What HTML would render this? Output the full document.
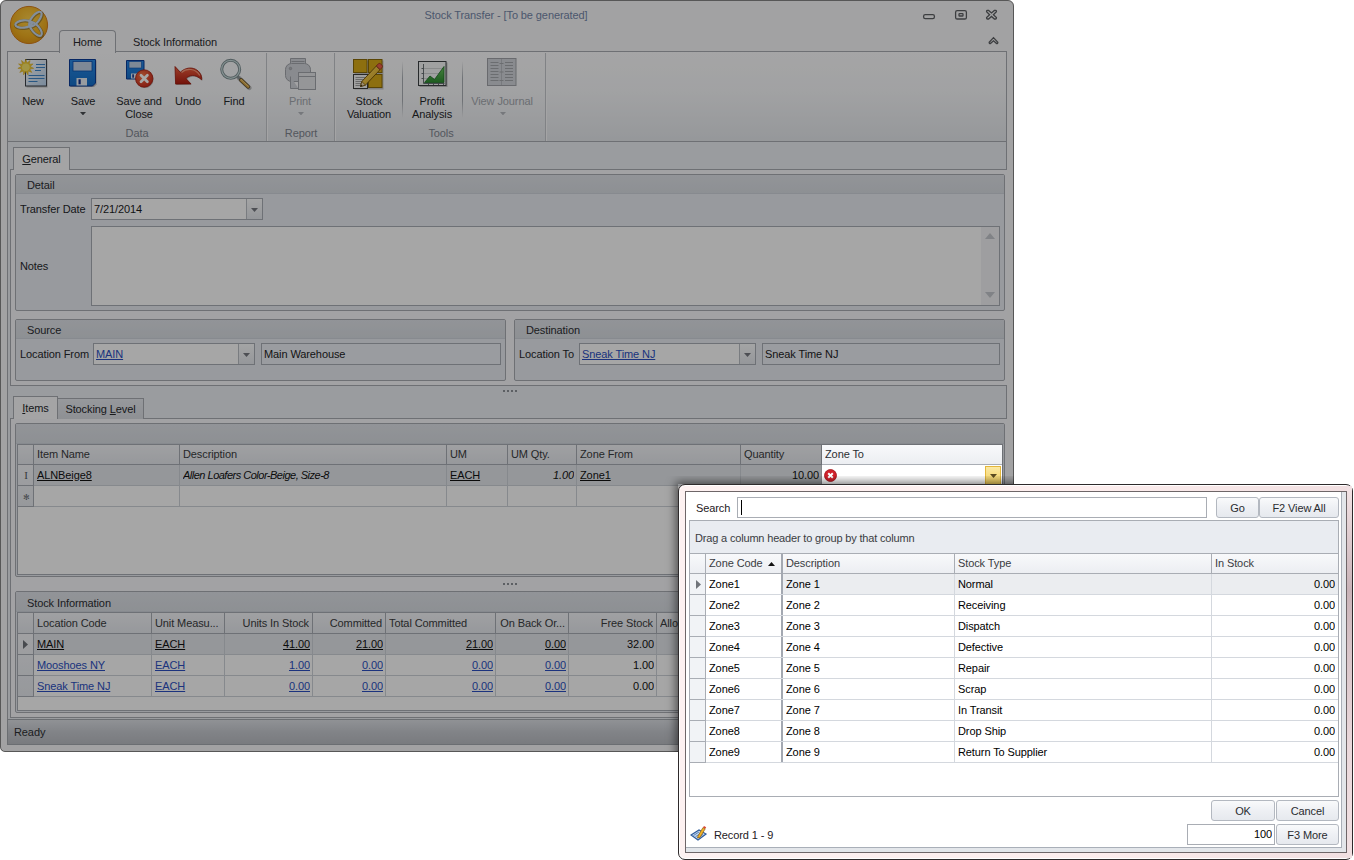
<!DOCTYPE html>
<html><head><meta charset="utf-8"><title>Stock Transfer</title><style>
html,body{margin:0;padding:0}
body{width:1354px;height:860px;background:#fff;position:relative;overflow:hidden;font-family:"Liberation Sans",sans-serif;font-size:11px;letter-spacing:-0.1px}
div,svg.a{position:absolute;box-sizing:border-box}
.t{white-space:nowrap;overflow:hidden}
#main{left:0;top:0;width:1014px;height:752px;box-sizing:border-box;border:1px solid #858585;border-radius:6px 6px 5px 5px;background:#f8f8f9;overflow:hidden}
#main>div,#main>svg{margin:-1px 0 0 -1px}
#dim{left:0;top:0;width:1014px;height:752px;border-radius:6px 6px 5px 5px;background:rgba(0,0,0,0.345)}
#pop{left:678px;top:484px;width:675px;height:376px;box-sizing:border-box;border:1px solid #2e2a2b;border-radius:7px;background:linear-gradient(90deg,#fdf1f1,#fdeeee 60%,#f1dfe1);box-shadow:inset 0 0 0 1px #fff}
</style></head><body>
<div id="main">
<div class="t" style="left:380px;top:6px;width:252px;height:18px;line-height:18px;text-align:center;color:#7486a8">Stock Transfer - [To be generated]</div>
<svg class="a" style="left:918px;top:4px" width="90" height="46" viewBox="0 0 90 46" fill="none" stroke="#5e6064" stroke-width="1.3">
<rect x="5.6" y="10.6" width="10.8" height="4" rx="1.6"/>
<rect x="37.6" y="6.6" width="10.8" height="8.4" rx="1.6"/><rect x="41" y="9.6" width="4" height="2.4" rx=".6"/>
<path d="M68.6 7.2 q0-.8 .8-.8 h1.2 l2.9 2.6 l2.9-2.6 h1.2 q.8 0 .8 .8 v.6 l-3 2.9 l3 2.9 v.6 q0 .8-.8 .8 h-1.2 l-2.9-2.6 l-2.9 2.6 h-1.2 q-.8 0-.8-.8 v-.6 l3-2.9 l-3-2.9z"/>
<path d="M71.2 38.2 l4.3-4.6 l4.3 4.6 q.2 1.4-1.2 1.4 l-3.1-2.8 l-3.1 2.8 q-1.4 0-1.2-1.4z"/>
</svg>
<svg class="a" style="left:8px;top:4px" width="42" height="42" viewBox="0 0 42 42">
<defs><radialGradient id="ab" cx="50%" cy="35%" r="65%"><stop offset="0" stop-color="#ffd048"/><stop offset=".7" stop-color="#f2b020"/><stop offset="1" stop-color="#e49a18"/></radialGradient></defs>
<circle cx="21" cy="21" r="18.6" fill="url(#ab)" stroke="#d8801c" stroke-width="1"/>
<g fill="none" stroke="#6a5a30" stroke-width="3.4" opacity=".55" transform="translate(.4 .6)"><ellipse cx="15.7" cy="20" rx="8.4" ry="3.7" transform="rotate(-5 15.7 20)"/><ellipse cx="27.4" cy="15" rx="8.8" ry="3.7" transform="rotate(-51 27.4 15)"/><ellipse cx="27.7" cy="25" rx="8.5" ry="3.7" transform="rotate(50 27.7 25)"/></g>
<g fill="none" stroke="#cadbee" stroke-width="2.2"><ellipse cx="15.7" cy="20" rx="8.4" ry="3.7" transform="rotate(-5 15.7 20)"/><ellipse cx="27.4" cy="15" rx="8.8" ry="3.7" transform="rotate(-51 27.4 15)"/><ellipse cx="27.7" cy="25" rx="8.5" ry="3.7" transform="rotate(50 27.7 25)"/></g>
</svg>
<div style="left:7px;top:51px;width:1000px;height:91px;border:1px solid #a9acb2;background:linear-gradient(#fcfcfd,#f6f7f9 45%,#e5e8ec)"></div>
<div style="left:59px;top:30px;width:57px;height:23px;border:1px solid #a9acb2;border-bottom:none;border-radius:4px 4px 0 0;background:#fcfcfd"></div>
<div class="t" style="left:59px;top:33px;width:57px;height:18px;line-height:18px;text-align:center;color:#2a2c30">Home</div>
<div class="t" style="left:126px;top:33px;width:98px;height:18px;line-height:18px;text-align:center;color:#2a2c30">Stock Information</div>
<div style="left:266px;top:53px;width:1px;height:88px;background:#c4c7cc"></div>
<div style="left:267px;top:53px;width:1px;height:88px;background:#fbfbfc"></div>
<div style="left:334px;top:53px;width:1px;height:88px;background:#c4c7cc"></div>
<div style="left:335px;top:53px;width:1px;height:88px;background:#fbfbfc"></div>
<div style="left:545px;top:53px;width:1px;height:88px;background:#c4c7cc"></div>
<div style="left:546px;top:53px;width:1px;height:88px;background:#fbfbfc"></div>
<div style="left:402px;top:61px;width:1px;height:57px;background:linear-gradient(rgba(170,174,180,0),#aaaeb4 30%,#aaaeb4 70%,rgba(170,174,180,0))"></div>
<div style="left:462px;top:61px;width:1px;height:57px;background:linear-gradient(rgba(170,174,180,0),#aaaeb4 30%,#aaaeb4 70%,rgba(170,174,180,0))"></div>
<div class="t" style="left:107px;top:124px;width:60px;height:18px;line-height:18px;color:#7f858f;text-align:center">Data</div>
<div class="t" style="left:271px;top:124px;width:60px;height:18px;line-height:18px;color:#7f858f;text-align:center">Report</div>
<div class="t" style="left:411px;top:124px;width:60px;height:18px;line-height:18px;color:#7f858f;text-align:center">Tools</div>
<div class="t" style="left:8px;top:92px;width:50px;height:18px;line-height:18px;text-align:center;color:#26282c">New</div>
<div class="t" style="left:58px;top:92px;width:50px;height:18px;line-height:18px;text-align:center;color:#26282c">Save</div>
<div class="t" style="left:104px;top:92px;width:70px;height:18px;line-height:18px;text-align:center;color:#26282c">Save and</div>
<div class="t" style="left:104px;top:105px;width:70px;height:18px;line-height:18px;text-align:center;color:#26282c">Close</div>
<div class="t" style="left:163px;top:92px;width:50px;height:18px;line-height:18px;text-align:center;color:#26282c">Undo</div>
<div class="t" style="left:209px;top:92px;width:50px;height:18px;line-height:18px;text-align:center;color:#26282c">Find</div>
<div class="t" style="left:275px;top:92px;width:50px;height:18px;line-height:18px;text-align:center;color:#a4a8ae">Print</div>
<div class="t" style="left:334px;top:92px;width:70px;height:18px;line-height:18px;text-align:center;color:#26282c">Stock</div>
<div class="t" style="left:334px;top:105px;width:70px;height:18px;line-height:18px;text-align:center;color:#26282c">Valuation</div>
<div class="t" style="left:397px;top:92px;width:70px;height:18px;line-height:18px;text-align:center;color:#26282c">Profit</div>
<div class="t" style="left:397px;top:105px;width:70px;height:18px;line-height:18px;text-align:center;color:#26282c">Analysis</div>
<div class="t" style="left:462px;top:92px;width:80px;height:18px;line-height:18px;text-align:center;color:#a4a8ae">View Journal</div>
<svg class="a" style="left:80.0px;top:112px" width="6" height="3.4" viewBox="0 0 6 3.4"><path d="M0 0h6L3.0 3.4z" fill="#4a4d52"/></svg>
<svg class="a" style="left:297.5px;top:112px" width="6" height="3.4" viewBox="0 0 6 3.4"><path d="M0 0h6L3.0 3.4z" fill="#b4b8be"/></svg>
<svg class="a" style="left:499.5px;top:112px" width="6" height="3.4" viewBox="0 0 6 3.4"><path d="M0 0h6L3.0 3.4z" fill="#b4b8be"/></svg>
<svg class="a" style="left:0px;top:52px" width="560" height="42" viewBox="0 52 560 42">
<defs>
<linearGradient id="pg" x1="0" y1="0" x2="1" y2="1"><stop offset="0" stop-color="#ffffff"/><stop offset="1" stop-color="#b9d3ee"/></linearGradient>
<linearGradient id="fl" x1="0" y1="0" x2="0" y2="1"><stop offset="0" stop-color="#2a8ae6"/><stop offset="1" stop-color="#146ec8"/></linearGradient>
<radialGradient id="rd" cx="40%" cy="35%" r="70%"><stop offset="0" stop-color="#f87848"/><stop offset="1" stop-color="#c8281c"/></radialGradient>
<linearGradient id="un" x1="0" y1="0" x2="0" y2="1"><stop offset="0" stop-color="#f06040"/><stop offset="1" stop-color="#b01c10"/></linearGradient>
<linearGradient id="gr" x1="0" y1="0" x2="0" y2="1"><stop offset="0" stop-color="#6cc860"/><stop offset="1" stop-color="#2c8c30"/></linearGradient>
<linearGradient id="pn" x1="0" y1="0" x2="1" y2="1"><stop offset="0" stop-color="#ffe070"/><stop offset="1" stop-color="#d8a010"/></linearGradient>
</defs>
<!-- New -->
<rect x="26.5" y="60.5" width="21" height="27" fill="#8a8a8a" opacity=".5"/>
<rect x="25.5" y="59.5" width="21" height="26.500" fill="url(#pg)" stroke="#3c4048"/>
<path d="M36 64.500h9M36 67.500h9M35 70.500h6M28.500 75.500h16M28.500 78.500h16M28.500 81.500h9" stroke="#3d86c8" stroke-width="1.100"/>
<path d="M25.80 59.20L27.04 62.98L30.13 60.47L29.13 64.32L33.08 63.88L30.16 66.57L33.72 68.34L29.80 69.03L31.85 72.44L28.18 70.90L28.05 74.88L25.80 71.60L23.55 74.88L23.42 70.90L19.75 72.44L21.80 69.03L17.88 68.34L21.44 66.57L18.52 63.88L22.47 64.32L21.47 60.47L24.56 62.98z" fill="#f2cc30" stroke="#d8a818" stroke-width=".5"/>
<circle cx="25.8" cy="67.2" r="3.8" fill="#f8e468"/>
<!-- Save -->
<path d="M70.500 60.500h26v24l-2.500 2.500h-23.500z" fill="#7a7a7a" opacity=".5"/>
<path d="M69.500 59.500h26v23.500l-3 3h-23z" fill="url(#fl)" stroke="#0c3c98"/>
<rect x="73" y="61.500" width="19" height="9.500" fill="#c0d2e6" stroke="#0c50b0" stroke-width=".8"/>
<rect x="76.500" y="78" width="10.500" height="7.500" fill="#e8eef4"/>
<rect x="78.500" y="79.300" width="2.200" height="5" fill="#10308c"/>
<!-- Save and close -->
<path d="M126.500 60.500h17.500v18.500h-17.500z" fill="url(#fl)" stroke="#0c3c98"/>
<rect x="129" y="61.500" width="12.500" height="6.500" fill="#c0d2e6" stroke="#0c50b0" stroke-width=".6"/>
<rect x="131" y="73.500" width="6.500" height="5" fill="#e8eef4"/><rect x="132.300" y="74.300" width="1.600" height="3.400" fill="#10308c"/>
<circle cx="144.800" cy="79.300" r="8.800" fill="#707070" opacity=".45"/>
<circle cx="144.200" cy="78.500" r="8.700" fill="url(#rd)" stroke="#a82010" stroke-width=".8"/>
<path d="M141 75.300l6.400 6.400M147.400 75.300l-6.400 6.400" stroke="#ffffff" stroke-width="2.700" stroke-linecap="round"/>
<!-- Undo -->
<path d="M175 66.500l.6 17.600 15.400-.2-5-5.300c2.800-3.300 9-5.200 15.600 1.200 1.300-8.800-10.800-17-21.300-7.600z" fill="#6a6a6a" opacity=".4" transform="translate(.8 .9)"/>
<path d="M175 66.500l.6 17.600 15.400-.2-5-5.300c2.800-3.300 9-5.200 15.600 1.200 1.300-8.800-10.800-17-21.300-7.600z" fill="url(#un)" stroke="#981408" stroke-width=".8" stroke-linejoin="round"/>
<path d="M181.500 72.500c5-4.500 14-4.500 18.300 3" fill="none" stroke="#ffb090" stroke-width="1.200" opacity=".8"/>
<!-- Find -->
<path d="M238 77l10.500 10" stroke="#606060" stroke-width="4.400" stroke-linecap="round" opacity=".4" transform="translate(.8 .9)"/>
<path d="M237.500 76.500l4 4" stroke="#8c9498" stroke-width="2.600"/>
<path d="M241 80l7.300 6.800" stroke="#5c4c2c" stroke-width="3.800" stroke-linecap="round"/><path d="M241 80l7.300 6.800" stroke="#d4a444" stroke-width="2.400" stroke-linecap="round"/>
<path d="M241.300 79.700l7 6.500" stroke="#f0d088" stroke-width=".9" stroke-linecap="round"/>
<circle cx="230.700" cy="69.300" r="9" fill="#f4f8fa" fill-opacity=".55" stroke="#7c8c90" stroke-width="3"/>
<circle cx="230.700" cy="69.300" r="9" fill="none" stroke="#c8dcdc" stroke-width="1.200"/>
<!-- Print (disabled) -->
<g stroke="#a2a5ab" fill="#d2d5da" stroke-width="1">
<path d="M290.500 63.500v-5h15v5"/>
<rect x="285.500" y="63.500" width="25" height="18" rx="6"/>
<path d="M291.500 61.500h13M290.500 76.500v12h8"/>
<rect x="298.500" y="72.500" width="17" height="17" fill="#e4e6e9"/>
<path d="M298.500 76.500h17" />
<circle cx="290.500" cy="68.500" r="1.200" fill="#b4b7bc"/>
</g>
<!-- Stock Valuation -->
<rect x="354.500" y="60.500" width="29" height="29" fill="#6a6a6a" opacity=".35"/>
<rect x="353.500" y="59.500" width="13.500" height="13" fill="#d8aa18" stroke="#8a6a08"/>
<rect x="368.500" y="59.500" width="13.500" height="13" fill="#d8aa18" stroke="#8a6a08"/>
<rect x="368.500" y="74.500" width="13.500" height="13" fill="#d8aa18" stroke="#8a6a08"/>
<rect x="353.500" y="74.500" width="14" height="14" fill="#f4f4f4" stroke="#3c3c3c"/>
<path d="M355.500 77.500h10M355.500 79.500h10M355.500 81.500h10M355.500 83.500h10M355.500 85.500h6" stroke="#8c8c8c" stroke-width=".8"/>
<path d="M360.500 86.500l1.300-5 14.500-15.500 3.800 3.600-14.600 15.500z" fill="url(#pn)" stroke="#705008" stroke-width=".9" stroke-linejoin="round"/>
<path d="M376.300 66l2.300-2.400c1.200-1.100 4.900 2.300 3.700 3.600l-2.200 2.400z" fill="#e86048" stroke="#903020" stroke-width=".8"/>
<path d="M360.500 86.500l1.300-5 3.700 3.600z" fill="#f0d8b0" stroke="#705008" stroke-width=".7"/>
<path d="M360.500 86.500l.5-1.900 1.400 1.400z" fill="#302010"/>
<!-- Profit Analysis -->
<rect x="419.500" y="62.500" width="28" height="24.500" fill="#6a6a6a" opacity=".4"/>
<rect x="418.500" y="61.500" width="27.500" height="24" fill="#f4f6f6" stroke="#3c4044"/>
<path d="M423.500 64v19.500h21" fill="none" stroke="#5c6468" stroke-width=".9"/>
<path d="M424 68.500h20M424 73.500h20M424 78.500h20" stroke="#c8cccc" stroke-width=".8"/>
<path d="M424.500 82.500l5.500-6.500 4.500 3.500 9.500-13v16z" fill="url(#gr)" stroke="#1c6c24" stroke-width=".8"/>
<path d="M421.500 68.500h2M421.500 73.500h2M421.500 78.500h2M428.500 83.500v1.500M433.500 83.500v1.500M438.500 83.500v1.500M443.500 83.500v1.500" stroke="#5c6468" stroke-width=".9"/>
<!-- View Journal (disabled) -->
<g stroke="#a0a3a9" stroke-width="1">
<rect x="487.500" y="58.500" width="28.500" height="27" fill="#d2d5da"/>
<path d="M501.500 59v26" stroke="#b8bbc0"/>
<path d="M490.500 62.500h8M490.500 65.500h8M490.500 68.500h8M490.500 71.500h8M490.500 74.500h8M490.500 77.500h8M490.500 80.500h8M505 62.500h8M505 65.500h8M505 68.500h8M505 71.500h8M505 74.500h8M505 77.500h8M505 80.500h8" stroke="#a4a7ac" stroke-width="1"/>
<path d="M499.500 63.500h4M499.500 72h4M499.500 80.500h4" stroke="#a4a7ac"/>
</g>
</svg>

<div style="left:7px;top:142px;width:1000px;height:578px;border-left:1px solid #a9acb2;border-right:1px solid #a9acb2;background:#ebeef3;box-sizing:border-box"></div>
<div style="left:10px;top:169px;width:997px;height:217px;border:1px solid #a9acb2;border-right:none;background:#f7f8fa;box-sizing:border-box"></div>
<div style="left:13px;top:147px;width:57px;height:23px;border:1px solid #a9acb2;border-bottom:none;background:#fafbfc;box-sizing:border-box"></div>
<div class="t" style="left:13px;top:150px;width:57px;height:18px;line-height:18px;text-align:center;color:#26282c"><u>G</u>eneral</div>
<div style="left:15px;top:174px;width:990px;height:137px;border:1px solid #a9acb2;border-radius:2px;background:#e8ebf1;box-sizing:border-box"></div>
<div style="left:16px;top:175px;width:988px;height:19px;background:linear-gradient(#dfe2e8,#d8dce2);border-bottom:1px solid #cfd3da;box-sizing:border-box"></div>
<div class="t" style="left:27px;top:176px;width:200px;height:19px;line-height:19px;color:#2c2e32">Detail</div>
<div class="t" style="left:20px;top:200px;width:70px;height:18px;line-height:18px;color:#26282c">Transfer Date</div>
<div style="left:91px;top:198px;width:172px;height:22px;border:1px solid #a9adb4;background:#fefefe;box-sizing:border-box"></div>
<div style="left:246px;top:199px;width:1px;height:20px;background:#b9bdc4"></div>
<div style="left:247px;top:199px;width:15px;height:20px;background:linear-gradient(#fafbfc,#e4e7ec)"></div>
<svg class="a" style="left:251.0px;top:207.5px" width="7" height="4" viewBox="0 0 7 4"><path d="M0 0h7L3.5 4z" fill="#767980"/></svg>
<div class="t" style="left:94px;top:199px;width:150px;height:20px;line-height:20px;color:#1c1c1e">7/21/2014</div>
<div class="t" style="left:20px;top:257px;width:70px;height:18px;line-height:18px;color:#26282c">Notes</div>
<div style="left:91px;top:226px;width:909px;height:80px;border:1px solid #a9adb4;background:#fefefe;box-sizing:border-box"></div>
<div style="left:981px;top:227px;width:18px;height:78px;background:#f1f2f4"></div>
<svg class="a" style="left:985px;top:233px" width="10" height="6"><path d="M0 6L5 0L10 6z" fill="#c4c7cd"/></svg>
<svg class="a" style="left:985px;top:292px" width="10" height="6"><path d="M0 0L5 6L10 0z" fill="#c4c7cd"/></svg>
<div style="left:15px;top:319px;width:491px;height:62px;border:1px solid #a9acb2;border-radius:2px;background:#e8ebf1;box-sizing:border-box"></div>
<div style="left:16px;top:320px;width:489px;height:19px;background:linear-gradient(#dfe2e8,#d8dce2);border-bottom:1px solid #cfd3da;box-sizing:border-box"></div>
<div class="t" style="left:27px;top:321px;width:200px;height:19px;line-height:19px;color:#2c2e32">Source</div>
<div style="left:514px;top:319px;width:491px;height:62px;border:1px solid #a9acb2;border-radius:2px;background:#e8ebf1;box-sizing:border-box"></div>
<div style="left:515px;top:320px;width:489px;height:19px;background:linear-gradient(#dfe2e8,#d8dce2);border-bottom:1px solid #cfd3da;box-sizing:border-box"></div>
<div class="t" style="left:526px;top:321px;width:200px;height:19px;line-height:19px;color:#2c2e32">Destination</div>
<div class="t" style="left:20px;top:345px;width:72px;height:18px;line-height:18px;color:#26282c">Location From</div>
<div style="left:93px;top:343px;width:162px;height:22px;border:1px solid #a9adb4;background:#fefefe;box-sizing:border-box"></div>
<div style="left:238px;top:344px;width:1px;height:20px;background:#b9bdc4"></div>
<div style="left:239px;top:344px;width:15px;height:20px;background:linear-gradient(#fafbfc,#e4e7ec)"></div>
<svg class="a" style="left:243.0px;top:352.5px" width="7" height="4" viewBox="0 0 7 4"><path d="M0 0h7L3.5 4z" fill="#767980"/></svg>
<div class="t" style="left:96px;top:344px;width:140px;height:20px;line-height:20px;color:#2b4fc0"><u>MAIN</u></div>
<div style="left:261px;top:343px;width:240px;height:22px;border:1px solid #a9adb4;background:#eceff4;box-sizing:border-box"></div>
<div class="t" style="left:264px;top:344px;width:200px;height:20px;line-height:20px;color:#1c1c1e">Main Warehouse</div>
<div class="t" style="left:519px;top:345px;width:60px;height:18px;line-height:18px;color:#26282c">Location To</div>
<div style="left:579px;top:343px;width:177px;height:22px;border:1px solid #a9adb4;background:#fefefe;box-sizing:border-box"></div>
<div style="left:739px;top:344px;width:1px;height:20px;background:#b9bdc4"></div>
<div style="left:740px;top:344px;width:15px;height:20px;background:linear-gradient(#fafbfc,#e4e7ec)"></div>
<svg class="a" style="left:744.0px;top:352.5px" width="7" height="4" viewBox="0 0 7 4"><path d="M0 0h7L3.5 4z" fill="#767980"/></svg>
<div class="t" style="left:582px;top:344px;width:155px;height:20px;line-height:20px;color:#2b4fc0"><u>Sneak Time NJ</u></div>
<div style="left:762px;top:343px;width:238px;height:22px;border:1px solid #a9adb4;background:#eceff4;box-sizing:border-box"></div>
<div class="t" style="left:765px;top:344px;width:200px;height:20px;line-height:20px;color:#1c1c1e">Sneak Time NJ</div>
<div style="left:503px;top:390px;width:2px;height:2px;background:#8d9198"></div>
<div style="left:507px;top:390px;width:2px;height:2px;background:#8d9198"></div>
<div style="left:511px;top:390px;width:2px;height:2px;background:#8d9198"></div>
<div style="left:515px;top:390px;width:2px;height:2px;background:#8d9198"></div>
<div style="left:10px;top:418px;width:997px;height:300px;border:1px solid #a9acb2;border-right:none;background:#f7f8fa;box-sizing:border-box"></div>
<div style="left:57px;top:398px;width:87px;height:21px;border:1px solid #a9acb2;border-bottom:none;background:linear-gradient(#e6e9ee,#d9dce2);box-sizing:border-box"></div>
<div class="t" style="left:57px;top:400px;width:87px;height:18px;line-height:18px;text-align:center;color:#26282c">Stocking <u>L</u>evel</div>
<div style="left:13px;top:396px;width:45px;height:23px;border:1px solid #a9acb2;border-bottom:none;background:#fafbfc;box-sizing:border-box"></div>
<div class="t" style="left:13px;top:399px;width:45px;height:18px;line-height:18px;text-align:center;color:#26282c"><u>I</u>tems</div>
<div style="left:15px;top:423px;width:990px;height:154px;border:1px solid #a9acb2;border-radius:2px;background:#e8ebf1;box-sizing:border-box"></div>
<div style="left:16px;top:424px;width:988px;height:20px;background:linear-gradient(#dfe2e8,#d8dce2);border-bottom:1px solid #cfd3da;box-sizing:border-box"></div>
<div style="left:17px;top:444px;width:986px;height:131px;border:1px solid #a9adb4;background:#fdfdfe;box-sizing:border-box"></div>
<div style="left:18px;top:445px;width:984px;height:19px;background:linear-gradient(#f4f5f8,#e6e9ee)"></div>
<div style="left:18px;top:464px;width:984px;height:1px;background:#a9adb4"></div>
<div style="left:33px;top:445px;width:1px;height:19px;background:#a9adb4"></div>
<div style="left:179px;top:445px;width:1px;height:19px;background:#a9adb4"></div>
<div class="t" style="left:37px;top:445px;width:141px;height:18px;line-height:18px;color:#3a3c40">Item Name</div>
<div style="left:446px;top:445px;width:1px;height:19px;background:#a9adb4"></div>
<div class="t" style="left:183px;top:445px;width:262px;height:18px;line-height:18px;color:#3a3c40">Description</div>
<div style="left:507px;top:445px;width:1px;height:19px;background:#a9adb4"></div>
<div class="t" style="left:450px;top:445px;width:56px;height:18px;line-height:18px;color:#3a3c40">UM</div>
<div style="left:576px;top:445px;width:1px;height:19px;background:#a9adb4"></div>
<div class="t" style="left:511px;top:445px;width:64px;height:18px;line-height:18px;color:#3a3c40">UM Qty.</div>
<div style="left:740px;top:445px;width:1px;height:19px;background:#a9adb4"></div>
<div class="t" style="left:580px;top:445px;width:159px;height:18px;line-height:18px;color:#3a3c40">Zone From</div>
<div style="left:821px;top:445px;width:1px;height:19px;background:#a9adb4"></div>
<div class="t" style="left:744px;top:445px;width:76px;height:18px;line-height:18px;color:#3a3c40">Quantity</div>
<div style="left:1001px;top:445px;width:1px;height:19px;background:#a9adb4"></div>
<div class="t" style="left:825px;top:445px;width:175px;height:18px;line-height:18px;color:#3a3c40">Zone To</div>
<div style="left:34px;top:465px;width:968px;height:21px;background:#e4e7ec"></div>
<div style="left:18px;top:485px;width:984px;height:1px;background:#cdd1d7"></div>
<div style="left:18px;top:506px;width:984px;height:1px;background:#cdd1d7"></div>
<div style="left:179px;top:465px;width:1px;height:42px;background:#cdd1d7"></div>
<div style="left:446px;top:465px;width:1px;height:42px;background:#cdd1d7"></div>
<div style="left:507px;top:465px;width:1px;height:42px;background:#cdd1d7"></div>
<div style="left:576px;top:465px;width:1px;height:42px;background:#cdd1d7"></div>
<div style="left:740px;top:465px;width:1px;height:42px;background:#cdd1d7"></div>
<div style="left:821px;top:465px;width:1px;height:42px;background:#cdd1d7"></div>
<div style="left:1001px;top:465px;width:1px;height:42px;background:#cdd1d7"></div>
<div style="left:18px;top:465px;width:15px;height:42px;background:linear-gradient(#f4f5f8,#e6e9ee)"></div>
<div style="left:33px;top:465px;width:1px;height:42px;background:#a9adb4"></div>
<div style="left:18px;top:485px;width:16px;height:1px;background:#a9adb4"></div>
<div style="left:18px;top:506px;width:16px;height:1px;background:#a9adb4"></div>
<div class="t" style="left:21px;top:466px;width:12px;height:19px;line-height:19px;color:#55585e;font-family:'Liberation Serif',serif;font-size:11px;text-align:center;width:10px">I</div>
<div class="t" style="left:20px;top:488px;width:12px;height:19px;line-height:19px;color:#6a6d73;font-size:8px;text-align:center">✻</div>
<div class="t" style="left:37px;top:466px;width:140px;height:19px;line-height:19px;color:#111"><u>ALNBeige8</u></div>
<div class="t" style="left:183px;top:466px;width:260px;height:19px;line-height:19px;color:#111;letter-spacing:-0.5px"><i>Allen Loafers Color-Beige, Size-8</i></div>
<div class="t" style="left:450px;top:466px;width:55px;height:19px;line-height:19px;color:#111"><u>EACH</u></div>
<div class="t" style="left:508px;top:466px;width:66px;height:19px;line-height:19px;color:#111;text-align:right"><i>1.00</i></div>
<div class="t" style="left:580px;top:466px;width:100px;height:19px;line-height:19px;color:#111"><u>Zone1</u></div>
<div class="t" style="left:741px;top:466px;width:78px;height:19px;line-height:19px;color:#111;text-align:right">10.00</div>
<div style="left:503px;top:583px;width:2px;height:2px;background:#8d9198"></div>
<div style="left:507px;top:583px;width:2px;height:2px;background:#8d9198"></div>
<div style="left:511px;top:583px;width:2px;height:2px;background:#8d9198"></div>
<div style="left:515px;top:583px;width:2px;height:2px;background:#8d9198"></div>
<div style="left:15px;top:591px;width:990px;height:122px;border:1px solid #a9acb2;border-radius:2px;background:#e8ebf1;box-sizing:border-box"></div>
<div style="left:16px;top:592px;width:988px;height:20px;background:linear-gradient(#dfe2e8,#d8dce2);border-bottom:1px solid #cfd3da;box-sizing:border-box"></div>
<div class="t" style="left:27px;top:593px;width:200px;height:20px;line-height:20px;color:#2c2e32">Stock Information</div>
<div style="left:17px;top:612px;width:986px;height:99px;border:1px solid #a9adb4;background:#fdfdfe;box-sizing:border-box"></div>
<div style="left:18px;top:613px;width:984px;height:20px;background:linear-gradient(#f4f5f8,#e6e9ee)"></div>
<div style="left:18px;top:633px;width:984px;height:1px;background:#a9adb4"></div>
<div style="left:33px;top:613px;width:1px;height:20px;background:#a9adb4"></div>
<div style="left:151px;top:613px;width:1px;height:20px;background:#a9adb4"></div>
<div class="t" style="left:37px;top:614px;width:111px;height:19px;line-height:19px;color:#3a3c40">Location Code</div>
<div style="left:224px;top:613px;width:1px;height:20px;background:#a9adb4"></div>
<div class="t" style="left:155px;top:614px;width:66px;height:19px;line-height:19px;color:#3a3c40">Unit Measu...</div>
<div style="left:312px;top:613px;width:1px;height:20px;background:#a9adb4"></div>
<div class="t" style="left:228px;top:614px;width:81px;height:19px;line-height:19px;color:#3a3c40;text-align:right">Units In Stock</div>
<div style="left:385px;top:613px;width:1px;height:20px;background:#a9adb4"></div>
<div class="t" style="left:316px;top:614px;width:66px;height:19px;line-height:19px;color:#3a3c40;text-align:right">Committed</div>
<div style="left:495px;top:613px;width:1px;height:20px;background:#a9adb4"></div>
<div class="t" style="left:389px;top:614px;width:103px;height:19px;line-height:19px;color:#3a3c40">Total Committed</div>
<div style="left:568px;top:613px;width:1px;height:20px;background:#a9adb4"></div>
<div class="t" style="left:499px;top:614px;width:66px;height:19px;line-height:19px;color:#3a3c40;text-align:right">On Back Or...</div>
<div style="left:656px;top:613px;width:1px;height:20px;background:#a9adb4"></div>
<div class="t" style="left:572px;top:614px;width:81px;height:19px;line-height:19px;color:#3a3c40;text-align:right">Free Stock</div>
<div style="left:760px;top:613px;width:1px;height:20px;background:#a9adb4"></div>
<div class="t" style="left:660px;top:614px;width:97px;height:19px;line-height:19px;color:#3a3c40">Allo</div>
<div style="left:34px;top:634px;width:968px;height:20px;background:#e4e7ec"></div>
<div style="left:18px;top:654px;width:984px;height:1px;background:#cdd1d7"></div>
<div style="left:18px;top:675px;width:984px;height:1px;background:#cdd1d7"></div>
<div style="left:18px;top:696px;width:984px;height:1px;background:#cdd1d7"></div>
<div style="left:151px;top:634px;width:1px;height:63px;background:#cdd1d7"></div>
<div style="left:224px;top:634px;width:1px;height:63px;background:#cdd1d7"></div>
<div style="left:312px;top:634px;width:1px;height:63px;background:#cdd1d7"></div>
<div style="left:385px;top:634px;width:1px;height:63px;background:#cdd1d7"></div>
<div style="left:495px;top:634px;width:1px;height:63px;background:#cdd1d7"></div>
<div style="left:568px;top:634px;width:1px;height:63px;background:#cdd1d7"></div>
<div style="left:656px;top:634px;width:1px;height:63px;background:#cdd1d7"></div>
<div style="left:760px;top:634px;width:1px;height:63px;background:#cdd1d7"></div>
<div style="left:18px;top:634px;width:15px;height:63px;background:linear-gradient(#f4f5f8,#e6e9ee)"></div>
<div style="left:33px;top:634px;width:1px;height:63px;background:#a9adb4"></div>
<div style="left:18px;top:654px;width:16px;height:1px;background:#a9adb4"></div>
<div style="left:18px;top:675px;width:16px;height:1px;background:#a9adb4"></div>
<div style="left:18px;top:696px;width:16px;height:1px;background:#a9adb4"></div>
<svg class="a" style="left:23px;top:640px" width="5" height="9"><path d="M0 0L5 4.5L0 9z" fill="#6f7379"/></svg>
<div class="t" style="left:37px;top:635px;width:112px;height:19px;line-height:19px;color:#111"><u>MAIN</u></div>
<div class="t" style="left:155px;top:635px;width:66px;height:19px;line-height:19px;color:#111"><u>EACH</u></div>
<div class="t" style="left:225px;top:635px;width:85px;height:19px;line-height:19px;color:#111;text-align:right"><u>41.00</u></div>
<div class="t" style="left:313px;top:635px;width:70px;height:19px;line-height:19px;color:#111;text-align:right"><u>21.00</u></div>
<div class="t" style="left:386px;top:635px;width:107px;height:19px;line-height:19px;color:#111;text-align:right"><u>21.00</u></div>
<div class="t" style="left:496px;top:635px;width:70px;height:19px;line-height:19px;color:#111;text-align:right"><u>0.00</u></div>
<div class="t" style="left:569px;top:635px;width:85px;height:19px;line-height:19px;color:#111;text-align:right">32.00</div>
<div class="t" style="left:37px;top:656px;width:112px;height:19px;line-height:19px;color:#2b4fc0"><u>Mooshoes NY</u></div>
<div class="t" style="left:155px;top:656px;width:66px;height:19px;line-height:19px;color:#2b4fc0"><u>EACH</u></div>
<div class="t" style="left:225px;top:656px;width:85px;height:19px;line-height:19px;color:#2b4fc0;text-align:right"><u>1.00</u></div>
<div class="t" style="left:313px;top:656px;width:70px;height:19px;line-height:19px;color:#2b4fc0;text-align:right"><u>0.00</u></div>
<div class="t" style="left:386px;top:656px;width:107px;height:19px;line-height:19px;color:#2b4fc0;text-align:right"><u>0.00</u></div>
<div class="t" style="left:496px;top:656px;width:70px;height:19px;line-height:19px;color:#2b4fc0;text-align:right"><u>0.00</u></div>
<div class="t" style="left:569px;top:656px;width:85px;height:19px;line-height:19px;color:#111;text-align:right">1.00</div>
<div class="t" style="left:37px;top:677px;width:112px;height:19px;line-height:19px;color:#2b4fc0"><u>Sneak Time NJ</u></div>
<div class="t" style="left:155px;top:677px;width:66px;height:19px;line-height:19px;color:#2b4fc0"><u>EACH</u></div>
<div class="t" style="left:225px;top:677px;width:85px;height:19px;line-height:19px;color:#2b4fc0;text-align:right"><u>0.00</u></div>
<div class="t" style="left:313px;top:677px;width:70px;height:19px;line-height:19px;color:#2b4fc0;text-align:right"><u>0.00</u></div>
<div class="t" style="left:386px;top:677px;width:107px;height:19px;line-height:19px;color:#2b4fc0;text-align:right"><u>0.00</u></div>
<div class="t" style="left:496px;top:677px;width:70px;height:19px;line-height:19px;color:#2b4fc0;text-align:right"><u>0.00</u></div>
<div class="t" style="left:569px;top:677px;width:85px;height:19px;line-height:19px;color:#111;text-align:right">0.00</div>
<div style="left:7px;top:719px;width:1000px;height:26px;border:1px solid #a4a8ae;background:linear-gradient(#dcdfe4,#c6c9cf 50%,#b9bcc2);box-sizing:border-box"></div>
<div class="t" style="left:14px;top:723px;width:100px;height:18px;line-height:18px;color:#2c2e32">Ready</div>
</div>
<div id="dim"></div>
<div style="left:822px;top:445px;width:180px;height:19px;background:linear-gradient(#f8f9fb,#eceef2)"></div>
<div style="left:822px;top:464px;width:180px;height:1px;background:#a9adb4"></div>
<div class="t" style="left:825px;top:445px;width:100px;height:18px;line-height:18px;color:#2c2e32">Zone To</div>
<div style="left:822px;top:465px;width:180px;height:20px;background:#fff"></div>
<div style="left:985px;top:466px;width:16px;height:19px;background:linear-gradient(#fbe9a4,#f3cf5e);border:1px solid #e4b73c;box-sizing:border-box"></div>
<svg class="a" style="left:989.5px;top:474px" width="7" height="4" viewBox="0 0 7 4"><path d="M0 0h7L3.5 4z" fill="#5a4a20"/></svg>
<svg class="a" style="left:824px;top:469px" width="13" height="13" viewBox="0 0 13 13"><circle cx="6.5" cy="6.5" r="6" fill="#d0202a" stroke="#a01018" stroke-width=".8"/><path d="M4.2 4.2L8.8 8.8M8.8 4.2L4.2 8.8" stroke="#fff" stroke-width="2"/></svg>
<div style="left:664px;top:476px;width:350px;height:276px;overflow:hidden"><div style="left:14px;top:8px;width:400px;height:400px;box-shadow:0 0 9px 2px rgba(0,0,0,.55)"></div></div>
<div id="pop"></div>
<div style="left:1347px;top:486px;width:5px;height:372px;background:linear-gradient(#f3e3e5,#c9b3b8 28%,#d9c5c9 45%,#ead8db 70%,#f1e0e2)"></div>
<div style="left:685px;top:491px;width:662px;height:362px;border:1px solid #6e6668;background:#e3e6ea;box-sizing:border-box"></div>
<div style="left:686px;top:492px;width:656px;height:356px;background:#fff;border-right:1px solid #a9afb8;border-bottom:1px solid #a9afb8"></div>
<div class="t" style="left:696px;top:499px;width:45px;height:18px;line-height:18px;color:#1e2024">Search</div>
<div style="left:737px;top:497px;width:470px;height:21px;border:1px solid #a9adb4;background:#fff;box-sizing:border-box"></div>
<div style="left:741px;top:500px;width:1px;height:15px;background:#000"></div>
<div style="left:1216px;top:497px;width:43px;height:21px;border:1px solid #b3b8c0;border-radius:3px;background:linear-gradient(#f9fafb,#eef0f4 50%,#e6e9ee);box-sizing:border-box"></div>
<div class="t" style="left:1216px;top:499px;width:43px;height:19px;line-height:19px;text-align:center;color:#2a2c30">Go</div>
<div style="left:1259px;top:497px;width:80px;height:21px;border:1px solid #b3b8c0;border-radius:3px;background:linear-gradient(#f9fafb,#eef0f4 50%,#e6e9ee);box-sizing:border-box"></div>
<div class="t" style="left:1259px;top:499px;width:80px;height:19px;line-height:19px;text-align:center;color:#2a2c30">F2 View All</div>
<div style="left:689px;top:520px;width:650px;height:277px;border:1px solid #a9adb4;background:#fff;box-sizing:border-box"></div>
<div style="left:690px;top:521px;width:648px;height:32px;background:#e9ecf1"></div>
<div class="t" style="left:695px;top:529px;width:300px;height:18px;line-height:18px;color:#3a3c42;letter-spacing:-0.17px">Drag a column header to group by that column</div>
<div style="left:690px;top:553px;width:648px;height:1px;background:#a9adb4"></div>
<div style="left:690px;top:554px;width:648px;height:19px;background:linear-gradient(#f8f9fb,#eceef2)"></div>
<div style="left:690px;top:573px;width:648px;height:1px;background:#a9adb4"></div>
<div style="left:705px;top:554px;width:1px;height:209px;background:#a9adb4"></div>
<div style="left:781px;top:554px;width:2px;height:209px;background:#a3a8b1"></div>
<div style="left:954px;top:554px;width:1px;height:19px;background:#a9adb4"></div>
<div style="left:1211px;top:554px;width:1px;height:19px;background:#a9adb4"></div>
<div class="t" style="left:709px;top:554px;width:71px;height:18px;line-height:18px;color:#3a3c42">Zone Code</div>
<div class="t" style="left:786px;top:554px;width:167px;height:18px;line-height:18px;color:#3a3c42">Description</div>
<div class="t" style="left:958px;top:554px;width:252px;height:18px;line-height:18px;color:#3a3c42">Stock Type</div>
<div class="t" style="left:1215px;top:554px;width:121px;height:18px;line-height:18px;color:#3a3c42">In Stock</div>
<svg class="a" style="left:768px;top:562px" width="7" height="4"><path d="M0 4L3.5 0L7 4z" fill="#111"/></svg>
<div style="left:783px;top:574px;width:555px;height:20px;background:#ebedf0"></div>
<div style="left:690px;top:574px;width:15px;height:189px;background:#f1f3f6"></div>
<div style="left:706px;top:594px;width:632px;height:1px;background:#d4d8de"></div>
<div style="left:690px;top:594px;width:15px;height:1px;background:#a9adb4"></div>
<div class="t" style="left:709px;top:575px;width:70px;height:19px;line-height:19px;color:#000">Zone1</div>
<div class="t" style="left:786px;top:575px;width:160px;height:19px;line-height:19px;color:#000">Zone 1</div>
<div class="t" style="left:958px;top:575px;width:240px;height:19px;line-height:19px;color:#000">Normal</div>
<div class="t" style="left:1250px;top:575px;width:85px;height:19px;line-height:19px;color:#000;text-align:right">0.00</div>
<div style="left:706px;top:615px;width:632px;height:1px;background:#d4d8de"></div>
<div style="left:690px;top:615px;width:15px;height:1px;background:#a9adb4"></div>
<div class="t" style="left:709px;top:596px;width:70px;height:19px;line-height:19px;color:#000">Zone2</div>
<div class="t" style="left:786px;top:596px;width:160px;height:19px;line-height:19px;color:#000">Zone 2</div>
<div class="t" style="left:958px;top:596px;width:240px;height:19px;line-height:19px;color:#000">Receiving</div>
<div class="t" style="left:1250px;top:596px;width:85px;height:19px;line-height:19px;color:#000;text-align:right">0.00</div>
<div style="left:706px;top:636px;width:632px;height:1px;background:#d4d8de"></div>
<div style="left:690px;top:636px;width:15px;height:1px;background:#a9adb4"></div>
<div class="t" style="left:709px;top:617px;width:70px;height:19px;line-height:19px;color:#000">Zone3</div>
<div class="t" style="left:786px;top:617px;width:160px;height:19px;line-height:19px;color:#000">Zone 3</div>
<div class="t" style="left:958px;top:617px;width:240px;height:19px;line-height:19px;color:#000">Dispatch</div>
<div class="t" style="left:1250px;top:617px;width:85px;height:19px;line-height:19px;color:#000;text-align:right">0.00</div>
<div style="left:706px;top:657px;width:632px;height:1px;background:#d4d8de"></div>
<div style="left:690px;top:657px;width:15px;height:1px;background:#a9adb4"></div>
<div class="t" style="left:709px;top:638px;width:70px;height:19px;line-height:19px;color:#000">Zone4</div>
<div class="t" style="left:786px;top:638px;width:160px;height:19px;line-height:19px;color:#000">Zone 4</div>
<div class="t" style="left:958px;top:638px;width:240px;height:19px;line-height:19px;color:#000">Defective</div>
<div class="t" style="left:1250px;top:638px;width:85px;height:19px;line-height:19px;color:#000;text-align:right">0.00</div>
<div style="left:706px;top:678px;width:632px;height:1px;background:#d4d8de"></div>
<div style="left:690px;top:678px;width:15px;height:1px;background:#a9adb4"></div>
<div class="t" style="left:709px;top:659px;width:70px;height:19px;line-height:19px;color:#000">Zone5</div>
<div class="t" style="left:786px;top:659px;width:160px;height:19px;line-height:19px;color:#000">Zone 5</div>
<div class="t" style="left:958px;top:659px;width:240px;height:19px;line-height:19px;color:#000">Repair</div>
<div class="t" style="left:1250px;top:659px;width:85px;height:19px;line-height:19px;color:#000;text-align:right">0.00</div>
<div style="left:706px;top:699px;width:632px;height:1px;background:#d4d8de"></div>
<div style="left:690px;top:699px;width:15px;height:1px;background:#a9adb4"></div>
<div class="t" style="left:709px;top:680px;width:70px;height:19px;line-height:19px;color:#000">Zone6</div>
<div class="t" style="left:786px;top:680px;width:160px;height:19px;line-height:19px;color:#000">Zone 6</div>
<div class="t" style="left:958px;top:680px;width:240px;height:19px;line-height:19px;color:#000">Scrap</div>
<div class="t" style="left:1250px;top:680px;width:85px;height:19px;line-height:19px;color:#000;text-align:right">0.00</div>
<div style="left:706px;top:720px;width:632px;height:1px;background:#d4d8de"></div>
<div style="left:690px;top:720px;width:15px;height:1px;background:#a9adb4"></div>
<div class="t" style="left:709px;top:701px;width:70px;height:19px;line-height:19px;color:#000">Zone7</div>
<div class="t" style="left:786px;top:701px;width:160px;height:19px;line-height:19px;color:#000">Zone 7</div>
<div class="t" style="left:958px;top:701px;width:240px;height:19px;line-height:19px;color:#000">In Transit</div>
<div class="t" style="left:1250px;top:701px;width:85px;height:19px;line-height:19px;color:#000;text-align:right">0.00</div>
<div style="left:706px;top:741px;width:632px;height:1px;background:#d4d8de"></div>
<div style="left:690px;top:741px;width:15px;height:1px;background:#a9adb4"></div>
<div class="t" style="left:709px;top:722px;width:70px;height:19px;line-height:19px;color:#000">Zone8</div>
<div class="t" style="left:786px;top:722px;width:160px;height:19px;line-height:19px;color:#000">Zone 8</div>
<div class="t" style="left:958px;top:722px;width:240px;height:19px;line-height:19px;color:#000">Drop Ship</div>
<div class="t" style="left:1250px;top:722px;width:85px;height:19px;line-height:19px;color:#000;text-align:right">0.00</div>
<div style="left:706px;top:762px;width:632px;height:1px;background:#d4d8de"></div>
<div style="left:690px;top:762px;width:15px;height:1px;background:#a9adb4"></div>
<div class="t" style="left:709px;top:743px;width:70px;height:19px;line-height:19px;color:#000">Zone9</div>
<div class="t" style="left:786px;top:743px;width:160px;height:19px;line-height:19px;color:#000">Zone 9</div>
<div class="t" style="left:958px;top:743px;width:240px;height:19px;line-height:19px;color:#000">Return To Supplier</div>
<div class="t" style="left:1250px;top:743px;width:85px;height:19px;line-height:19px;color:#000;text-align:right">0.00</div>
<div style="left:954px;top:574px;width:1px;height:189px;background:#d4d8de"></div>
<div style="left:1211px;top:574px;width:1px;height:189px;background:#d4d8de"></div>
<svg class="a" style="left:696px;top:580px" width="5" height="9"><path d="M0 0L5 4.5L0 9z" fill="#70747a"/></svg>
<div style="left:1211px;top:800px;width:64px;height:21px;border:1px solid #b3b8c0;border-radius:3px;background:linear-gradient(#f9fafb,#eef0f4 50%,#e6e9ee);box-sizing:border-box"></div>
<div class="t" style="left:1211px;top:802px;width:64px;height:19px;line-height:19px;text-align:center;color:#2a2c30">OK</div>
<div style="left:1276px;top:800px;width:63px;height:21px;border:1px solid #b3b8c0;border-radius:3px;background:linear-gradient(#f9fafb,#eef0f4 50%,#e6e9ee);box-sizing:border-box"></div>
<div class="t" style="left:1276px;top:802px;width:63px;height:19px;line-height:19px;text-align:center;color:#2a2c30">Cancel</div>
<div style="left:1187px;top:824px;width:88px;height:21px;border:1px solid #a9adb4;background:#fff;box-sizing:border-box"></div>
<div class="t" style="left:1190px;top:825px;width:82px;height:19px;line-height:19px;color:#000;text-align:right">100</div>
<div style="left:1276px;top:824px;width:63px;height:21px;border:1px solid #b3b8c0;border-radius:3px;background:linear-gradient(#f9fafb,#eef0f4 50%,#e6e9ee);box-sizing:border-box"></div>
<div class="t" style="left:1276px;top:826px;width:63px;height:19px;line-height:19px;text-align:center;color:#2a2c30">F3 More</div>
<div class="t" style="left:714px;top:826px;width:100px;height:18px;line-height:18px;color:#1e2024">Record 1 - 9</div>
<svg class="a" style="left:690px;top:825px" width="18" height="17" viewBox="0 0 18 17">
<path d="M1 10L9 5L16 9L8 15z" fill="#c4d8f0" stroke="#2c5a9c" stroke-width="1.2"/>
<path d="M3.5 10.5L9 7M5.5 11.7L11 8.2M7.5 12.9L13 9.4" stroke="#4c78b4" stroke-width=".9"/>
<path d="M8 11L13 2.5L15.2 3.8L10.2 12.2L7.6 13z" fill="#f0b428" stroke="#8a5a10" stroke-width=".7"/>
<path d="M13 2.5L14 .9L16.2 2.2L15.2 3.8z" fill="#d84838"/>
</svg>
</body></html>
